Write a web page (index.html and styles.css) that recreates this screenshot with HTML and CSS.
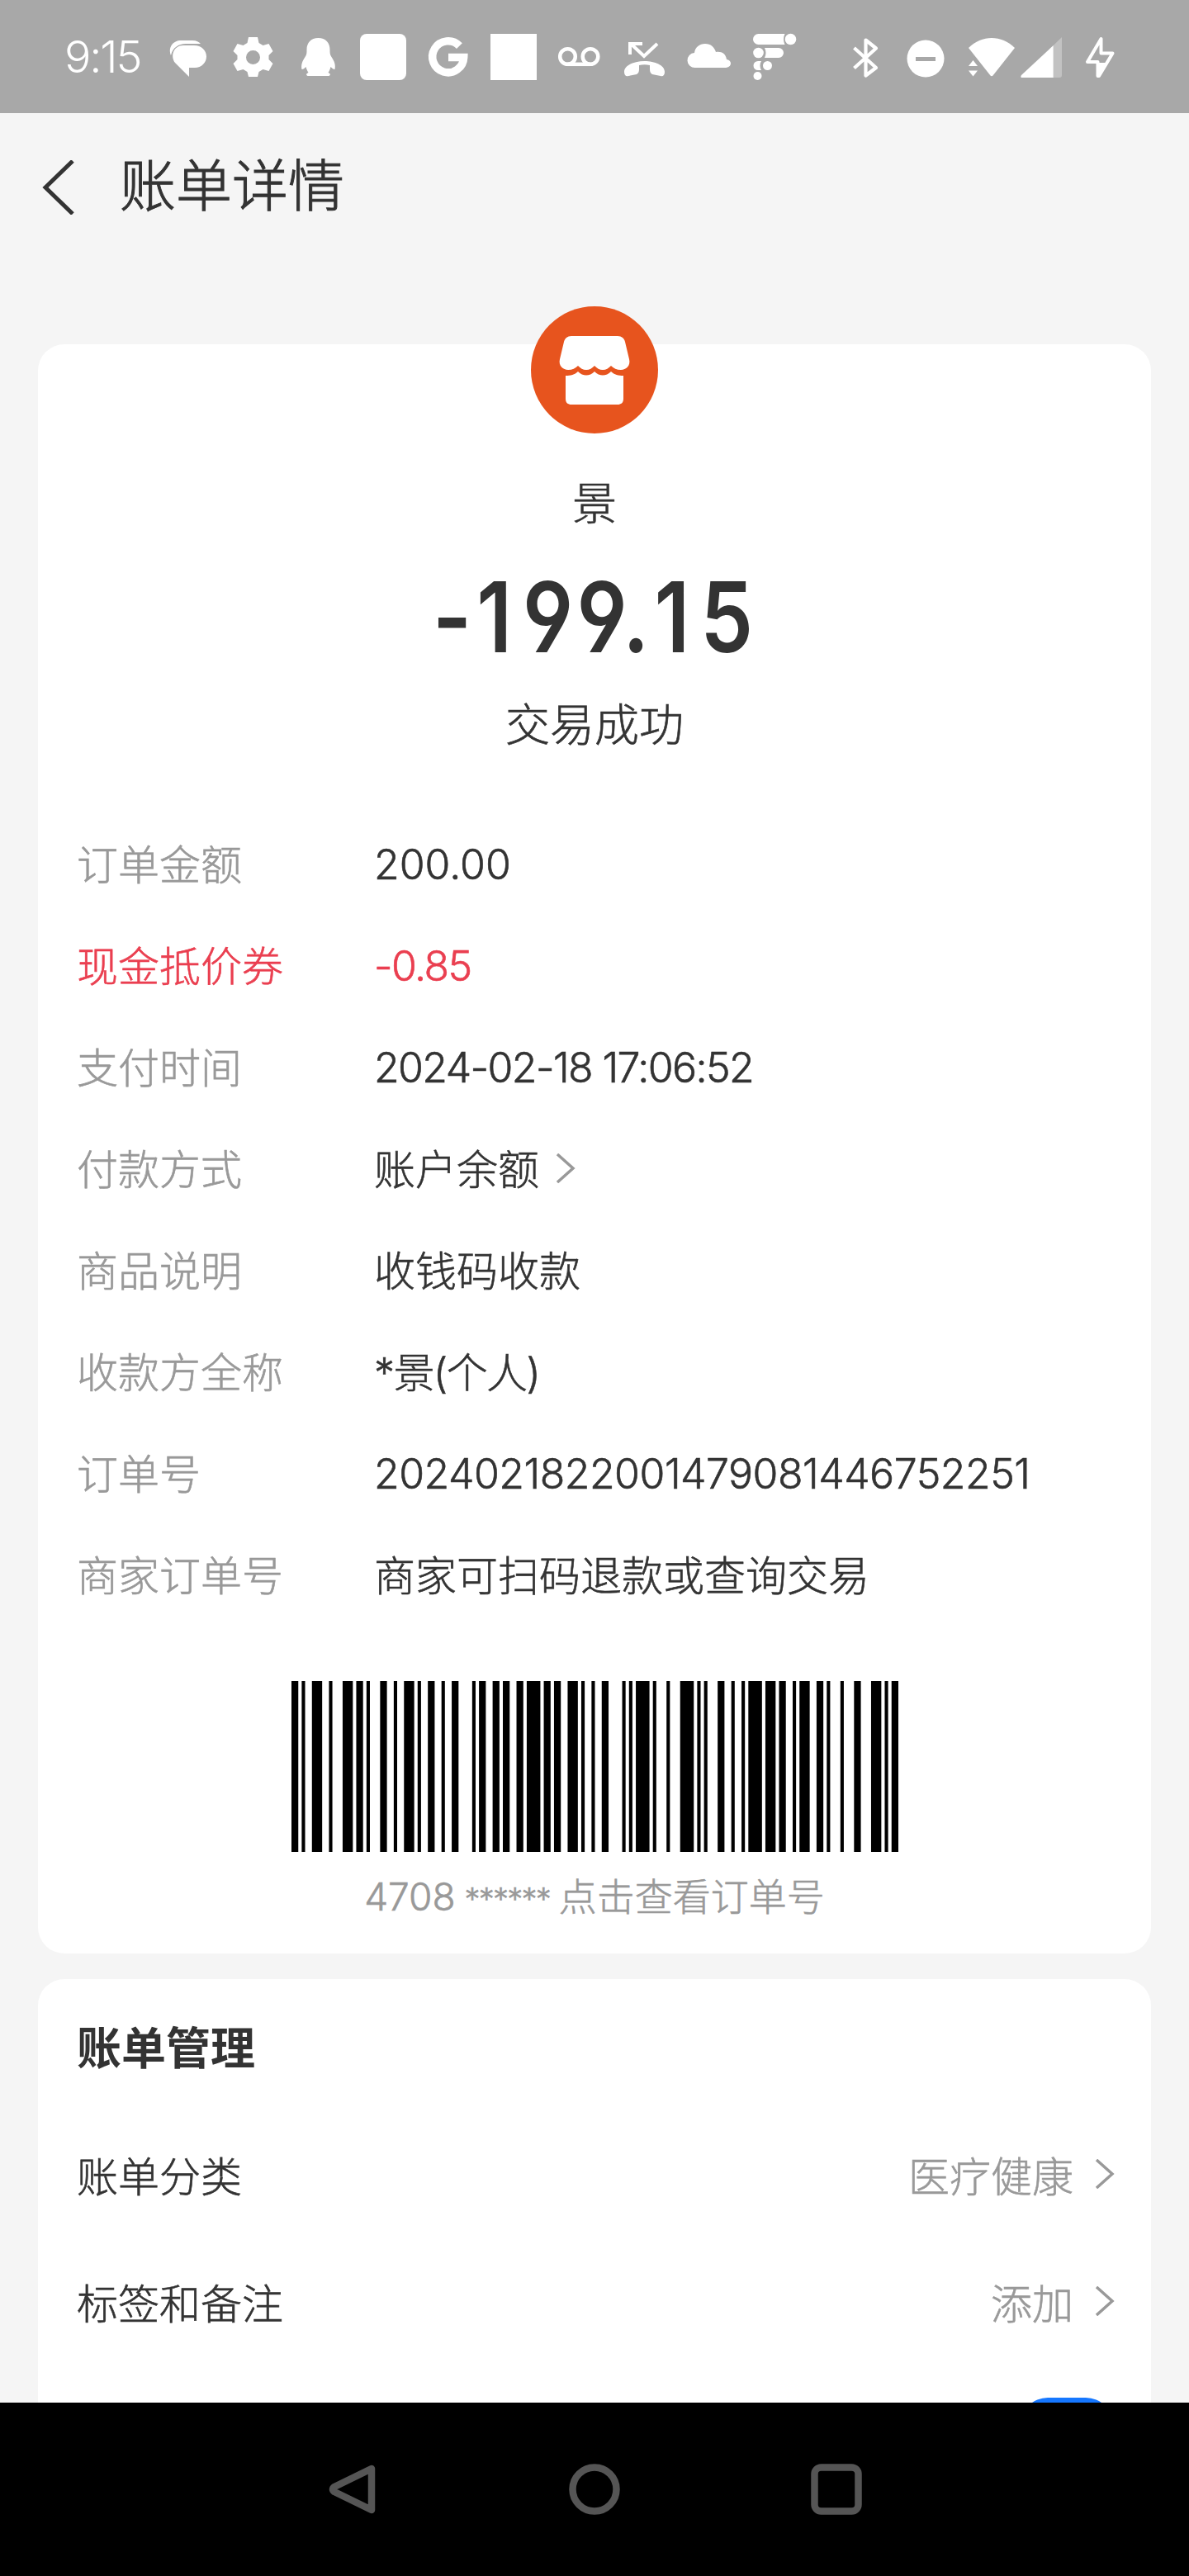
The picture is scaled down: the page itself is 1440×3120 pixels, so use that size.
FILE: index.html
```html
<!DOCTYPE html>
<html lang="zh-CN">
  <head>
    <meta charset="UTF-8" />
    <meta name="viewport" content="width=device-width, initial-scale=1.0" />
    <title>账单详情</title>
    <link rel="stylesheet" href="styles.css">
  </head>
  <body>
    <div class="phone">
      <div class="status-bar">
        <span class="time">9:15</span>
        <!-- one drawing for the whole icon strip -->
        <svg class="status-icons" width="1160" height="60" viewBox="200 38 1160 60" fill="#fff">
          <!-- messages -->
          <path d="M207 66c-4-10 3-18 12-18h14c5 0 8 2 10 4h-18c-9 0-16 5-18 14z" />
          <path d="M222 54h13c9 0 15 6 15 13.500S244 81 236 81h-7v11L212 75c-6-8-2-21 10-21z" />
          <!-- settings -->
          <path fill-rule="evenodd" d="M301 44h11l1.500 7 5 3 7-2 5 9-5 5v5l5 5-5 9-7-2-5 3-1.500 6h-11l-1.500-6-5-3-7 2-5-9 5-5v-5l-5-5 5-9 7 2 5-3zM306.500 60a8.500 8.500 0 1 0 0 17 8.500 8.500 0 0 0 0-17z" />
          <!-- penguin -->
          <path d="M385.500 45c9 0 14 6 14 14 0 4 0 6 2 9 4 6 5 10 4 15-2 0-3-1-5-3-1 4-2 5-3 7 3 1 3 3 1 4h-26c-2-1-2-3 1-4-1-2-2-3-3-7-2 2-3 3-5 3-1-5 0-9 4-15 2-3 2-5 2-9 0-8 5-14 14-14z" />
          <rect x="436" y="40" width="56" height="56" rx="8" />
          <!-- google -->
          <path d="M556.400 54.600A19 19 0 1 0 561.700 68.500H543" fill="none" stroke="#fff" stroke-width="9.500" />
          <rect x="594" y="40" width="56" height="56" />
          <!-- voicemail -->
          <g fill="none" stroke="#fff" stroke-width="4.500">
            <circle cx="687.500" cy="67.500" r="9.300" />
            <circle cx="715" cy="67.500" r="9.300" />
            <path d="M687 76.800h28" />
          </g>
          <!-- missed call -->
          <path d="M763 65V52h15M764 52l16 15 16-15" fill="none" stroke="#fff" stroke-width="4" />
          <path d="M756 86c0-8 12-13 24.500-13S805 78 805 86c0 4-2 6-5 5l-10-2c-2-1-3-3-3-6v-5c-4-1-9-1-13 0v5c0 3-1 5-3 6l-10 2c-3 1-5-1-5-5z" />
          <!-- cloud -->
          <path d="M842 81a9 9 0 0 1-1-18c1-7 6-11 13-11s11 4 13 10c7-1 12 2 13 9 7 1 7 10-2 10z" />
          <!-- dotted F -->
          <path d="M918.500 40h32c-2 4-2 9 0 13h-32a6.500 6.500 0 0 1 0-13z" />
          <circle cx="957.500" cy="46.500" r="6.800" />
          <circle cx="918.500" cy="63" r="6.300" />
          <path d="M926 57h17a6 6 0 0 1 0 12h-17c2-4 2-8 0-12z" />
          <path d="M918 73h4c-2 3-2 8 0 11h-4a5.500 5.500 0 0 1 0-11z" />
          <circle cx="929.500" cy="78.500" r="5.500" />
          <circle cx="917.500" cy="91" r="5" />
          <!-- bluetooth -->
          <path d="M1034.500 57l26.500 24-12.500 9.500v-43L1061 57.500l-26.500 24" fill="none" stroke="#fff" stroke-width="4.200" stroke-linejoin="round" />
          <!-- do not disturb -->
          <circle cx="1121" cy="70" r="22.500" />
          <path d="M1109 70.500h24" stroke="#a8a8a8" stroke-width="5" />
          <!-- wifi -->
          <path d="M1199.500 90.500l-26.500-33.500c16-16 40-16 56 0l-26.500 33.500q-1.500 1.500-3 0z" />
          <path d="M1173 79h11l-5.500-7zM1173 84.500h11l-5.500 7z" />
          <!-- signal -->
          <path d="M1286 44v46q0 3-3 3h-7.300V54z" opacity=".3" />
          <path d="M1275.700 54v39H1238c-2 0-2-1-1-3z" />
          <!-- charging -->
          <path d="M1333.500 46v17.500h14L1331 91h-1.500V74H1317z" fill="none" stroke="#fff" stroke-width="4" stroke-linejoin="round" />
          <path d="M1329 75h12l-11 16z" />
        </svg>
      </div>

      <header class="title-bar">
        <svg class="back" width="40" height="66" viewBox="0 0 40 66">
          <path d="M37 1L4 33l33 32" fill="none" stroke="#333" stroke-width="5" />
        </svg>
        <h1>账单详情</h1>
      </header>

      <main>
        <section class="card bill">
          <svg class="avatar" width="154" height="154" viewBox="0 0 154 154">
            <circle cx="77" cy="77" r="77" fill="#e7541e" />
            <path fill="#fff" d="M49 36h56c5 0 8 3 9 7l5 21c2 8-4 13-10 13-5 0-9-2-12-5-3 3-6 5-10 5s-7-2-10-5c-3 3-6 5-10 5s-7-2-10-5c-3 3-7 5-12 5-6 0-12-5-10-13l5-21c1-4 4-7 9-7z" />
            <path fill="#fff" d="M42 84c6 0 11-1 15-5 6 6 14 6 20 0 6 6 14 6 20 0 4 4 9 5 15 5v28c0 5-3 7-7 7H49c-4 0-7-2-7-7z" />
          </svg>
          <p class="payee">景</p>
          <p class="amount"><span>-<i>1</i>99.<i>1</i>5</span></p>
          <p class="state">交易成功</p>

          <dl class="details">
            <div class="row"><dt>订单金额</dt><dd>200.00</dd></div>
            <div class="row discount"><dt>现金抵价券</dt><dd class="tight">-0.85</dd></div>
            <div class="row"><dt>支付时间</dt><dd class="tight">2024-02-18 17:06:52</dd></div>
            <div class="row">
              <dt>付款方式</dt>
              <dd class="cjk">账户余额
                <svg class="arrow" width="24" height="36" viewBox="0 0 24 36"><path d="M2 1l19 17L2 35" /></svg>
              </dd>
            </div>
            <div class="row"><dt>商品说明</dt><dd class="cjk">收钱码收款</dd></div>
            <div class="row"><dt>收款方全称</dt><dd class="cjk tight">*景(个人)</dd></div>
            <div class="row"><dt>订单号</dt><dd class="order-no">2024021822001479081446752251</dd></div>
            <div class="row"><dt>商家订单号</dt><dd class="cjk">商家可扫码退款或查询交易</dd></div>
          </dl>

          <svg class="barcode" viewBox="0 0 178 1" preserveAspectRatio="none">
            <path d="M0 0h2v1h-2zM3 0h1v1h-1zM6 0h3v1h-3zM11 0h1v1h-1zM15 0h3v1h-3zM19 0h2v1h-2zM22 0h1v1h-1zM26 0h2v1h-2zM30 0h1v1h-1zM33 0h3v1h-3zM37 0h1v1h-1zM40 0h2v1h-2zM44 0h1v1h-1zM47 0h2v1h-2zM53 0h1v1h-1zM55 0h2v1h-2zM59 0h2v1h-2zM62 0h2v1h-2zM66 0h2v1h-2zM69 0h4v1h-4zM74 0h2v1h-2zM77 0h2v1h-2zM81 0h3v1h-3zM85 0h1v1h-1zM88 0h1v1h-1zM91 0h2v1h-2zM97 0h1v1h-1zM99 0h1v1h-1zM101 0h4v1h-4zM106 0h1v1h-1zM110 0h1v1h-1zM114 0h4v1h-4zM119 0h1v1h-1zM121 0h1v1h-1zM125 0h2v1h-2zM129 0h1v1h-1zM132 0h1v1h-1zM134 0h4v1h-4zM139 0h3v1h-3zM143 0h2v1h-2zM147 0h1v1h-1zM149 0h3v1h-3zM154 0h2v1h-2zM157 0h1v1h-1zM161 0h1v1h-1zM165 0h2v1h-2zM170 0h3v1h-3zM174 0h1v1h-1zM176 0h2v1h-2z" />
          </svg>
          <p class="barcode-tip">4708 <span class="stars">******</span> 点击查看订单号</p>
        </section>

        <section class="card manage">
          <h2>账单管理</h2>
          <div class="manage-row">
            <span>账单分类</span>
            <span class="manage-value">医疗健康
              <svg class="arrow" width="24" height="36" viewBox="0 0 24 36"><path d="M2 1l19 17L2 35" /></svg>
            </span>
          </div>
          <div class="manage-row">
            <span>标签和备注</span>
            <span class="manage-value">添加
              <svg class="arrow" width="24" height="36" viewBox="0 0 24 36"><path d="M2 1l19 17L2 35" /></svg>
            </span>
          </div>
          <div class="switch"></div>
        </section>
      </main>

      <nav class="nav-bar">
        <svg width="62" height="62" viewBox="0 0 62 62"><path d="M54 6v50L9 34q-4-3 0-6z" /></svg>
        <svg width="62" height="62" viewBox="0 0 62 62"><circle cx="31" cy="31" r="26.500" /></svg>
        <svg width="62" height="62" viewBox="0 0 62 62"><rect x="4.500" y="4.500" width="53" height="53" rx="8" /></svg>
      </nav>
    </div>
  </body>
</html>
```
FILE: styles.css
```css
* {
  margin: 0;
  padding: 0;
  box-sizing: border-box;
}

body {
  font-family: Inter, "Noto Sans CJK SC", sans-serif;
  font-weight: 300;
  color: #333;
  background-color: #f5f5f5;
}

.phone {
  width: 1440px;
  height: 3120px;
  display: flex;
  flex-direction: column;
  overflow: hidden;
}

.status-bar {
  flex: none;
  height: 137px;
  background-color: #a8a8a8;
  color: white;
  display: flex;
  align-items: center;
  padding-left: 78px;
}

.time {
  width: 122px;
  font-size: 54px;
  letter-spacing: -2.2px;
}

.title-bar {
  flex: none;
  height: 179px;
  display: flex;
  align-items: center;
  padding-left: 51px;
}

.title-bar h1 {
  margin-left: 54px;
  padding-bottom: 12px;
  font-size: 68px;
  font-weight: 300;
  -webkit-text-stroke: 1px;
}

main {
  flex: 1;
  min-height: 0;
  padding: 101px 46px 0;
  overflow: hidden;
  -webkit-text-stroke: 0.6px;
}

.card {
  background-color: white;
  border-radius: 32px;
}

.bill {
  height: 1949px;
  display: flex;
  flex-direction: column;
  align-items: center;
}

.avatar {
  flex: none;
  margin-top: -46px;
}

.payee,
.state {
  font-size: 54px;
  line-height: 80px;
}

.payee {
  margin-top: 46px;
}

.amount {
  height: 120px;
  margin-top: 36px;
  font-size: 118px;
  line-height: 120px;
  font-weight: 600;
  letter-spacing: 5px;
  font-feature-settings: "cv04";
  -webkit-text-stroke: 0;
}

.amount span {
  display: inline-block;
  transform: scaleX(0.86);
}

.amount i {
  padding: 0 10px 0 2px;
  font-style: normal;
}

.state {
  margin-top: 32px;
}

.details {
  width: 100%;
  margin-top: 66px;
  padding: 0 47px;
  font-size: 50px;
}

.row {
  display: flex;
  align-items: center;
  height: 123px;
}

.row dt {
  width: 360px;
  padding-bottom: 6px;
  color: #999;
}

.row dd {
  display: flex;
  align-items: center;
}

.row .cjk {
  padding-bottom: 6px;
}

.row .tight {
  letter-spacing: -1.6px;
}

.row .order-no {
  letter-spacing: -0.5px;
}

.discount dt,
.discount dd {
  color: #ea3f50;
}

.arrow {
  fill: none;
  stroke: #999;
  stroke-width: 3.5;
}

.row .arrow {
  margin: 4px 0 0 20px;
}

.barcode {
  flex: none;
  width: 735px;
  height: 207px;
  margin-top: 67px;
}

.barcode-tip {
  margin-top: 24px;
  font-size: 46px;
  line-height: 60px;
  word-spacing: -2px;
  color: #999;
}

.stars {
  font-size: 38px;
  letter-spacing: -1.8px;
}

.manage {
  height: 900px;
  margin-top: 31px;
  padding: 40px 44px 0 47px;
}

.manage h2 {
  font-size: 54px;
  line-height: 90px;
  font-weight: 700;
  -webkit-text-stroke: 0;
}

.manage-row {
  display: flex;
  justify-content: space-between;
  align-items: center;
  height: 154px;
  font-size: 50px;
}

.manage h2 + .manage-row {
  margin-top: 29px;
}

.manage-value {
  display: flex;
  align-items: center;
  color: #999;
}

.manage-value .arrow {
  margin-left: 26px;
}

.switch {
  width: 112px;
  height: 66px;
  margin: 40px 2px 0 auto;
  border-radius: 33px;
  background-color: #1677ff;
}

.nav-bar {
  flex: none;
  height: 210px;
  display: flex;
  justify-content: center;
  align-items: center;
  gap: 231px;
  background-color: black;
}

.nav-bar svg {
  fill: none;
  stroke: #555;
  stroke-width: 8.5;
  stroke-linejoin: round;
}
```
